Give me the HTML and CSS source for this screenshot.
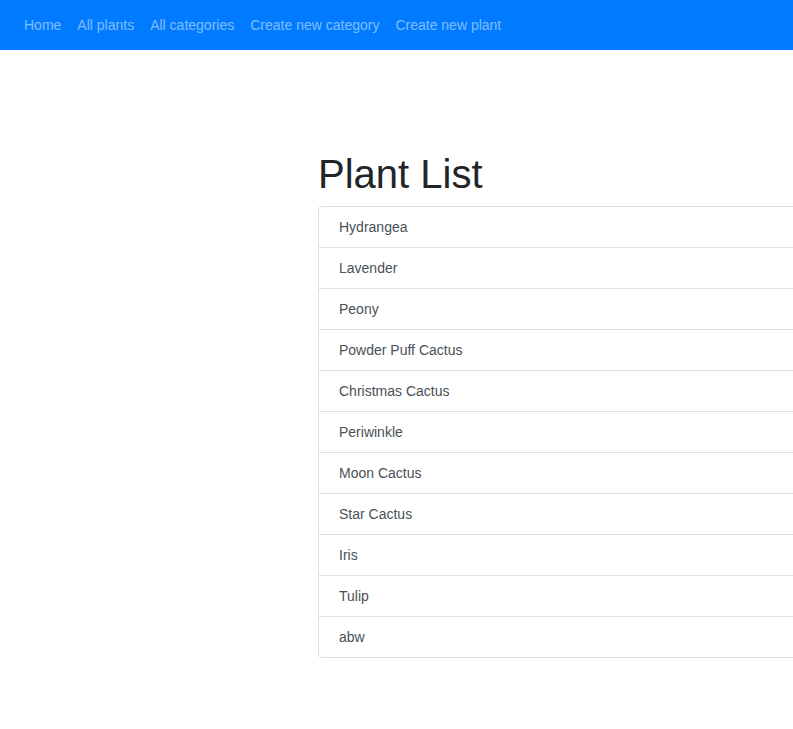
FILE: index.html
```html
<!DOCTYPE html>
<html lang="en">
<head>
<meta charset="utf-8">
<title>Plant List</title>
<link rel="stylesheet" href="styles.css">
</head>
<body>
<nav class="navbar">
  <a class="nav-link" href="#">Home</a>
  <a class="nav-link" href="#">All plants</a>
  <a class="nav-link" href="#">All categories</a>
  <a class="nav-link" href="#">Create new category</a>
  <a class="nav-link" href="#">Create new plant</a>
</nav>
<main class="content">
  <h1 class="title">Plant List</h1>
  <ul class="list-group">
    <li class="list-item">Hydrangea</li>
    <li class="list-item">Lavender</li>
    <li class="list-item">Peony</li>
    <li class="list-item">Powder Puff Cactus</li>
    <li class="list-item">Christmas Cactus</li>
    <li class="list-item">Periwinkle</li>
    <li class="list-item">Moon Cactus</li>
    <li class="list-item">Star Cactus</li>
    <li class="list-item">Iris</li>
    <li class="list-item">Tulip</li>
    <li class="list-item">abw</li>
  </ul>
</main>
</body>
</html>
```
FILE: styles.css
```css
html, body {
  margin: 0;
  padding: 0;
  overflow: hidden;
  background: #fff;
  font-family: "Liberation Sans", Arial, sans-serif;
  color: #212529;
}

.navbar {
  display: flex;
  align-items: center;
  height: 50px;
  padding: 0 16px;
  background: #007bff;
}

.nav-link {
  padding: 0 8px;
  font-size: 14px;
  line-height: 21px;
  color: rgba(255, 255, 255, 0.5);
  text-decoration: none;
}

.content {
  padding: 100px 0 0 318px;
}

.title {
  margin: 0 0 8px 0;
  font-size: 40px;
  font-weight: 400;
  line-height: 48px;
}

.list-group {
  list-style: none;
  margin: 0;
  padding: 0;
  width: 600px;
  display: flex;
  flex-direction: column;
}

.list-item {
  padding: 10px 20px;
  font-size: 14px;
  line-height: 20px;
  color: #495057;
  border: 1px solid #dfdfdf;
  margin-bottom: -1px;
}

.list-item:first-child {
  border-top-left-radius: 4px;
  border-top-right-radius: 4px;
}

.list-item:last-child {
  margin-bottom: 0;
  border-bottom-left-radius: 4px;
  border-bottom-right-radius: 4px;
}
```
